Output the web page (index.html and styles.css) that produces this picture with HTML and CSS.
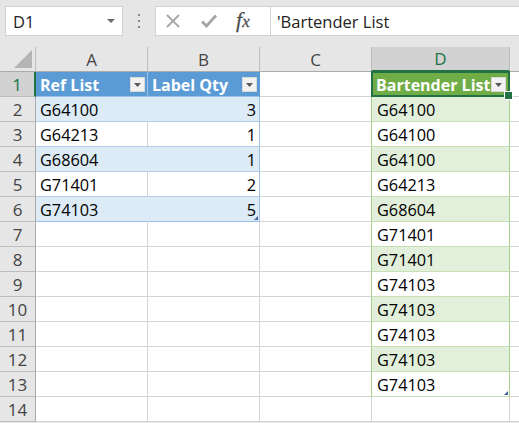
FILE: index.html
```html
<!DOCTYPE html>
<html>
<head>
<meta charset="utf-8">
<link rel="stylesheet" href="styles.css">
</head>
<body>
<div class="app">
  <div class="toolbar">
    <div class="namebox">
      <span class="nb-text">D1</span>
      <svg class="nb-arrow" width="8" height="5" viewBox="0 0 8 5"><polygon points="0,0 8,0 4,4" fill="#6b6b6b"/></svg>
    </div>
    <div class="sep">
      <svg width="4" height="16" viewBox="0 0 4 16"><rect x="1" y="1" width="2" height="2" fill="#8a8a8a"/><rect x="1" y="7" width="2" height="2" fill="#8a8a8a"/><rect x="1" y="13" width="2" height="2" fill="#8a8a8a"/></svg>
    </div>
    <div class="formula">
      <div class="ficons">
        <svg class="ic" width="16" height="16" viewBox="0 0 16 16"><path d="M2 2 L14 14 M14 2 L2 14" stroke="#a6a6a6" stroke-width="1.8" fill="none"/></svg>
        <svg class="ic" width="18" height="16" viewBox="0 0 18 16"><path d="M2 8.5 L6.5 13 L16 2.5" stroke="#a6a6a6" stroke-width="2.8" fill="none"/></svg>
        <span class="fx">f<span class="fxx">x</span></span>
      </div>
      <div class="ftext">'Bartender List</div>
    </div>
  </div>
  <div class="sheet">
    <div class="corner"><svg width="36" height="25" viewBox="0 0 36 25"><polygon points="32,3 32,21 14,21" fill="#b5b5b5"/></svg></div>
    <div class="ch">A</div>
    <div class="ch">B</div>
    <div class="ch">C</div>
    <div class="ch sel">D</div>
    <div class="ch last"></div>

    <div class="rh sel">1</div>
    <div class="c th">Ref List<span class="fb"><svg width="7" height="4" viewBox="0 0 7 4"><polygon points="0,0 7,0 3.5,4" fill="#595959"/></svg></span></div>
    <div class="c th">Label Qty<span class="fb"><svg width="7" height="4" viewBox="0 0 7 4"><polygon points="0,0 7,0 3.5,4" fill="#595959"/></svg></span></div>
    <div class="c"></div>
    <div class="c gh active">Bartender List<span class="fb"><svg width="7" height="4" viewBox="0 0 7 4"><polygon points="0,0 7,0 3.5,4" fill="#595959"/></svg></span></div>
    <div class="c e"></div>

    <div class="rh">2</div>
    <div class="c tb">G64100</div>
    <div class="c tb num">3</div>
    <div class="c"></div>
    <div class="c gb">G64100</div>
    <div class="c e"></div>

    <div class="rh">3</div>
    <div class="c tw">G64213</div>
    <div class="c tw num">1</div>
    <div class="c"></div>
    <div class="c gw">G64100</div>
    <div class="c e"></div>

    <div class="rh">4</div>
    <div class="c tb">G68604</div>
    <div class="c tb num">1</div>
    <div class="c"></div>
    <div class="c gb">G64100</div>
    <div class="c e"></div>

    <div class="rh">5</div>
    <div class="c tw">G71401</div>
    <div class="c tw num">2</div>
    <div class="c"></div>
    <div class="c gw">G64213</div>
    <div class="c e"></div>

    <div class="rh">6</div>
    <div class="c tb tlast">G74103</div>
    <div class="c tb tlast num handle">5</div>
    <div class="c"></div>
    <div class="c gb">G68604</div>
    <div class="c e"></div>

    <div class="rh">7</div>
    <div class="c"></div>
    <div class="c"></div>
    <div class="c"></div>
    <div class="c gw">G71401</div>
    <div class="c e"></div>

    <div class="rh">8</div>
    <div class="c"></div>
    <div class="c"></div>
    <div class="c"></div>
    <div class="c gb">G71401</div>
    <div class="c e"></div>

    <div class="rh">9</div>
    <div class="c"></div>
    <div class="c"></div>
    <div class="c"></div>
    <div class="c gw">G74103</div>
    <div class="c e"></div>

    <div class="rh">10</div>
    <div class="c"></div>
    <div class="c"></div>
    <div class="c"></div>
    <div class="c gb">G74103</div>
    <div class="c e"></div>

    <div class="rh">11</div>
    <div class="c"></div>
    <div class="c"></div>
    <div class="c"></div>
    <div class="c gw">G74103</div>
    <div class="c e"></div>

    <div class="rh">12</div>
    <div class="c"></div>
    <div class="c"></div>
    <div class="c"></div>
    <div class="c gb">G74103</div>
    <div class="c e"></div>

    <div class="rh">13</div>
    <div class="c"></div>
    <div class="c"></div>
    <div class="c"></div>
    <div class="c gw glast handle">G74103</div>
    <div class="c e"></div>

    <div class="rh">14</div>
    <div class="c"></div>
    <div class="c"></div>
    <div class="c"></div>
    <div class="c"></div>
    <div class="c e"></div>
  </div>
</div>
</body>
</html>
```

FILE: styles.css
```css
* { box-sizing: border-box; }
html, body { margin: 0; padding: 0; }
body {
  background: #e6e6e6;
  font-family: "Open Sans", "Liberation Sans", sans-serif;
  font-size: 16px;
  color: #000;
  width: 519px;
  height: 423px;
  overflow: hidden;
}
.app { display: flex; flex-direction: column; width: 519px; }

.toolbar {
  height: 47px;
  display: flex;
  align-items: flex-start;
  padding-top: 6px;
  padding-left: 5px;
}
.namebox {
  width: 118px;
  height: 30px;
  background: #fff;
  border: 1px solid #d2d2d2;
  display: flex;
  align-items: center;
  padding-left: 7px;
  padding-right: 7px;
}
.nb-text { font-size: 16.5px; color: #222; flex: 1; }
.nb-arrow { display: block; }
.sep {
  width: 32px;
  height: 30px;
  display: flex;
  align-items: center;
  justify-content: center;
}
.sep svg { display: block; }
.formula {
  flex: 1;
  height: 30px;
  background: #fff;
  border: 1px solid #d2d2d2;
  border-right: none;
  display: flex;
  align-items: center;
}
.ficons {
  display: flex;
  align-items: center;
  height: 100%;
  padding-left: 9px;
  width: 115px;
  border-right: 1px solid #d2d2d2;
  background: #fff;
}
.ic { display: block; }
.ficons .ic:first-child { margin-right: 19px; }
.ficons .ic:nth-child(2) { margin-right: 18px; }
.fx {
  font-family: "Liberation Serif", serif;
  font-style: italic;
  font-size: 22px;
  color: #505050;
  line-height: 1;
  margin-top: -3px;
  -webkit-text-stroke: 0.3px #505050;
}
.fxx { font-size: 17px; }
.ftext {
  padding-left: 6px;
  font-size: 16.5px;
  color: #222;
}

.sheet {
  display: grid;
  grid-template-columns: 36px 112px 112px 112px 138px 1fr;
  grid-auto-rows: 25px;
  background: #fff;
}
.corner {
  background: #e6e6e6;
  border-right: 1px solid #bdbdbd;
  border-bottom: 1px solid #ababab;
}
.corner svg { display: block; }
.ch {
  background: #e6e6e6;
  border-right: 1px solid #bdbdbd;
  border-bottom: 1px solid #ababab;
  display: flex;
  align-items: center;
  justify-content: center;
  color: #444;
  font-size: 17px;
}
.ch.sel {
  background: #d2d2d2;
  color: #217346;
  border-bottom: 2px solid #217346;
}
.ch.last { border-right: none; }
.rh {
  background: #e6e6e6;
  border-right: 1px solid #ababab;
  border-bottom: 1px solid #bdbdbd;
  display: flex;
  align-items: center;
  justify-content: center;
  color: #444;
  font-size: 17px;
  padding-top: 1px;
}
.rh.sel {
  background: #d2d2d2;
  color: #217346;
  border-right: 2px solid #217346;
}

.c {
  border-right: 1px solid #d4d4d4;
  border-bottom: 1px solid #d4d4d4;
  display: flex;
  align-items: center;
  padding-left: 4px;
  padding-right: 3px;
  padding-top: 1px;
  white-space: nowrap;
  position: relative;
  font-size: 16.3px;
}
.c.e { border-right: none; }
.num { justify-content: flex-end; }

.th {
  background: #5b9bd5;
  color: #fff;
  font-weight: bold;
  border-right-color: #5b9bd5;
  border-bottom-color: #9bc2e6;
  padding-right: 2px;
  font-size: 16px;
}
.th:nth-child(8) { border-right-color: #9bc2e6; }
.tb { background: #ddebf7; border-bottom-color: #b4cde6; border-right-color: #ddebf7; }
.tw { background: #fff; border-bottom-color: #b4cde6; }
.tb.num { border-right-color: #9bc2e6; }
.tw.num { border-right-color: #9bc2e6; }
.tlast { border-bottom-color: #9bc2e6; }

.gh {
  background: #70ad47;
  color: #fff;
  font-weight: bold;
  padding-right: 2px;
  font-size: 16px;
}
.gb { background: #e2efda; border-bottom-color: #c6e0b4; border-right-color: #a9d08e; }
.gw { background: #fff; border-bottom-color: #c6e0b4; border-right-color: #a9d08e; }
.gb, .gw { border-left: 1px solid #a9d08e; margin-left: -1px; padding-left: 5px; }

.fb {
  margin-left: auto;
  width: 15px;
  height: 15px;
  background: #f2f2f2;
  border: 1px solid #d9d9d9;
  display: flex;
  align-items: center;
  justify-content: center;
}
.gh .fb { margin-right: 1px; }
.fb svg { display: block; }

.active::after {
  content: "";
  position: absolute;
  left: -1px;
  top: -1px;
  right: -1px;
  bottom: -1px;
  border: 2px solid #217346;
  pointer-events: none;
}
.active::before {
  content: "";
  position: absolute;
  right: -4px;
  bottom: -4px;
  width: 7px;
  height: 7px;
  background: #217346;
  border: 1px solid #fff;
  z-index: 2;
}
.handle::after {
  content: "";
  position: absolute;
  right: 1px;
  bottom: 1px;
  width: 0;
  height: 0;
  border-left: 4px solid transparent;
  border-bottom: 4px solid #44609c;
}
```
